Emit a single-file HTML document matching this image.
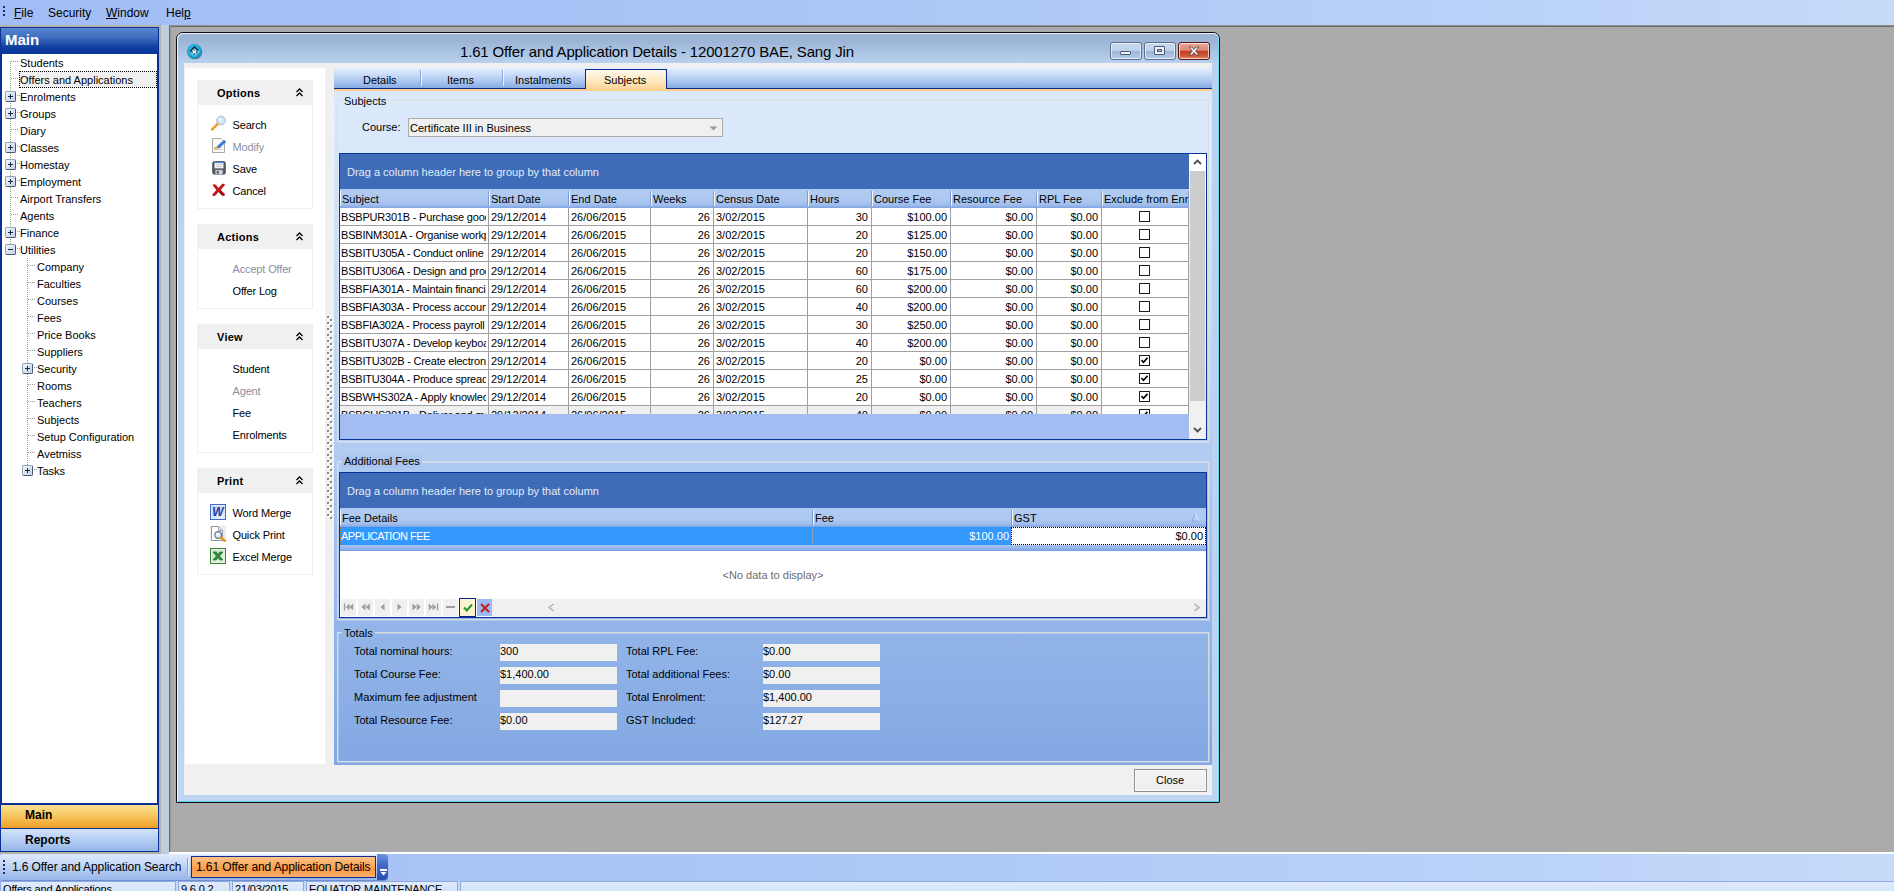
<!DOCTYPE html><html><head><meta charset="utf-8"><title>1.61 Offer and Application Details</title><style>

*{box-sizing:border-box;margin:0;padding:0}
html,body{width:1894px;height:891px;overflow:hidden}
body{position:relative;background:#ababab;font-family:"Liberation Sans",sans-serif;font-size:11px;color:#000;line-height:13px}
.a{position:absolute}
.t{position:absolute;white-space:nowrap;line-height:13px;height:13px}
u{text-decoration:underline}
#menubar{left:0;top:0;width:1894px;height:25px;background:linear-gradient(90deg,#a2bdf5 0%,#a9c4f6 40%,#bad2f8 80%,#c6dbf9 100%)}
#menubar .t{font-size:12px;top:6px;line-height:14px;height:14px}
#menuline{left:169px;top:25px;width:1725px;height:2px;background:linear-gradient(180deg,#8f8f8f 50%,#6b6b6b 50%)}
#band{left:0;top:25px;width:161px;height:829px;background:#b3b1ab}
#mdiwhite{left:169px;top:852px;width:1725px;height:2px;background:#fff}
#nav{left:0;top:27px;width:159px;height:825px;background:#0a2f96}
#navhead{left:1px;top:1px;width:157px;height:26px;background:linear-gradient(180deg,#5a86cf 0%,#3f6fc0 35%,#0f3f9e 75%,#0a3798 100%)}
#navhead .t{left:4px;top:3px;font-size:15px;font-weight:bold;color:#fff;line-height:18px;height:18px}
#tree{left:2px;top:27px;width:155px;height:749px;background:#fff}
.ti{font-size:11px}
.pm{position:absolute;width:11px;height:11px;border:1px solid;border-color:#93a3bd #4a5a76 #4a5a76 #93a3bd;background:linear-gradient(135deg,#f4f7fc,#c4d0e6);border-radius:2px}
.pm:before{content:"";position:absolute;left:2px;top:4px;width:5px;height:1px;background:#1a2a4a}
.pm.plus:after{content:"";position:absolute;left:4px;top:2px;width:1px;height:5px;background:#1a2a4a}
.hd{position:absolute;height:1px;background-image:linear-gradient(90deg,#9a9a9a 50%,transparent 50%);background-size:2px 1px}
.vd{position:absolute;width:1px;background-image:linear-gradient(180deg,#9a9a9a 50%,transparent 50%);background-size:1px 2px}
#navmain{left:1px;top:776px;width:157px;height:25px;background:linear-gradient(180deg,#fbe08e 0%,#f6c45e 50%,#f09f24 100%);border-top:2px solid #0a2f96}
#navrep{left:1px;top:802px;width:157px;height:22px;background:linear-gradient(180deg,#d3e2fa 0%,#b5cef3 50%,#94b5e8 100%)}
.nb{font-weight:bold;font-size:12px;left:24px}
#split{left:161px;top:25px;width:8px;height:829px;background:#c0cddf}
#mdiedge{left:169px;top:25px;width:2px;height:827px;background:linear-gradient(90deg,#6b6b6b 50%,#9a9a9a 50%)}
#tabbar{left:0;top:854px;width:1894px;height:27px;background:linear-gradient(90deg,#a4bff5 0%,#abc6f6 40%,#bad2f8 80%,#c6dbf9 100%)}
#tstrip{left:0;top:0px;width:388px;height:26px;border-radius:3px 4px 4px 3px;background:linear-gradient(180deg,#dfeafc 0%,#c9dbf8 35%,#a9c3ee 75%,#98b6ea 100%);box-shadow:0 1px 0 #6f8fd0}
#acttab{left:191px;top:2px;width:185px;height:22px;border:1px solid #15288f;background:linear-gradient(180deg,#fdc489 0%,#fca559 45%,#fc9a48 60%,#fdb06a 100%)}
#ovf{left:377px;top:0px;width:11px;height:26px;border-radius:0 4px 4px 0;background:linear-gradient(180deg,#6f93de 0%,#4169c8 40%,#2a4fb0 100%)}
.sp{position:absolute;top:0;height:12px;border:1px solid #8faade;border-bottom:none;background:linear-gradient(180deg,#dfeafc,#d2e2fa);overflow:hidden}
#status{left:0;top:881px;width:1894px;height:10px;background:#c5d9f8;overflow:hidden}

</style></head><body>
<div id="menubar" class="a">
<div class="a" style="left:3px;top:6px;width:2px;height:2px;background:#1c2f6b"></div>
<div class="a" style="left:3px;top:10px;width:2px;height:2px;background:#1c2f6b"></div>
<div class="a" style="left:3px;top:14px;width:2px;height:2px;background:#1c2f6b"></div>
<div class="t" style="left:14px"><u>F</u>ile</div>
<div class="t" style="left:48px">Security</div>
<div class="t" style="left:106px"><u>W</u>indow</div>
<div class="t" style="left:166px">Hel<u>p</u></div>
</div><div id="band" class="a"></div><div id="menuline" class="a"></div><div id="mdiwhite" class="a"></div>
<div id="nav" class="a">
<div id="navhead" class="a"><div class="t">Main</div></div>
<div id="tree" class="a">
<div class="vd" style="left:8px;top:7px;height:183px"></div>
<div class="vd" style="left:25px;top:204px;height:207px"></div>
<div class="t ti" style="left:18px;top:3px">Students</div>
<div class="hd" style="left:9px;top:7px;width:8px"></div>
<div class="a" style="left:17px;top:17px;width:138px;height:17px;background:#f0f0f0;border:1px dotted #000"></div>
<div class="t ti" style="left:18px;top:20px">Offers and Applications</div>
<div class="hd" style="left:9px;top:24px;width:8px"></div>
<div class="t ti" style="left:18px;top:37px">Enrolments</div>
<div class="pm plus" style="left:3px;top:37px"></div>
<div class="hd" style="left:15px;top:41px;width:3px"></div>
<div class="t ti" style="left:18px;top:54px">Groups</div>
<div class="pm plus" style="left:3px;top:54px"></div>
<div class="hd" style="left:15px;top:58px;width:3px"></div>
<div class="t ti" style="left:18px;top:71px">Diary</div>
<div class="hd" style="left:9px;top:75px;width:8px"></div>
<div class="t ti" style="left:18px;top:88px">Classes</div>
<div class="pm plus" style="left:3px;top:88px"></div>
<div class="hd" style="left:15px;top:92px;width:3px"></div>
<div class="t ti" style="left:18px;top:105px">Homestay</div>
<div class="pm plus" style="left:3px;top:105px"></div>
<div class="hd" style="left:15px;top:109px;width:3px"></div>
<div class="t ti" style="left:18px;top:122px">Employment</div>
<div class="pm plus" style="left:3px;top:122px"></div>
<div class="hd" style="left:15px;top:126px;width:3px"></div>
<div class="t ti" style="left:18px;top:139px">Airport Transfers</div>
<div class="hd" style="left:9px;top:143px;width:8px"></div>
<div class="t ti" style="left:18px;top:156px">Agents</div>
<div class="hd" style="left:9px;top:160px;width:8px"></div>
<div class="t ti" style="left:18px;top:173px">Finance</div>
<div class="pm plus" style="left:3px;top:173px"></div>
<div class="hd" style="left:15px;top:177px;width:3px"></div>
<div class="t ti" style="left:18px;top:190px">Utilities</div>
<div class="pm " style="left:3px;top:190px"></div>
<div class="hd" style="left:15px;top:194px;width:3px"></div>
<div class="t ti" style="left:35px;top:207px">Company</div>
<div class="hd" style="left:26px;top:211px;width:8px"></div>
<div class="t ti" style="left:35px;top:224px">Faculties</div>
<div class="hd" style="left:26px;top:228px;width:8px"></div>
<div class="t ti" style="left:35px;top:241px">Courses</div>
<div class="hd" style="left:26px;top:245px;width:8px"></div>
<div class="t ti" style="left:35px;top:258px">Fees</div>
<div class="hd" style="left:26px;top:262px;width:8px"></div>
<div class="t ti" style="left:35px;top:275px">Price Books</div>
<div class="hd" style="left:26px;top:279px;width:8px"></div>
<div class="t ti" style="left:35px;top:292px">Suppliers</div>
<div class="hd" style="left:26px;top:296px;width:8px"></div>
<div class="t ti" style="left:35px;top:309px">Security</div>
<div class="pm plus" style="left:20px;top:309px"></div>
<div class="hd" style="left:32px;top:313px;width:3px"></div>
<div class="t ti" style="left:35px;top:326px">Rooms</div>
<div class="hd" style="left:26px;top:330px;width:8px"></div>
<div class="t ti" style="left:35px;top:343px">Teachers</div>
<div class="hd" style="left:26px;top:347px;width:8px"></div>
<div class="t ti" style="left:35px;top:360px">Subjects</div>
<div class="hd" style="left:26px;top:364px;width:8px"></div>
<div class="t ti" style="left:35px;top:377px">Setup Configuration</div>
<div class="hd" style="left:26px;top:381px;width:8px"></div>
<div class="t ti" style="left:35px;top:394px">Avetmiss</div>
<div class="hd" style="left:26px;top:398px;width:8px"></div>
<div class="t ti" style="left:35px;top:411px">Tasks</div>
<div class="pm plus" style="left:20px;top:411px"></div>
<div class="hd" style="left:32px;top:415px;width:3px"></div>
</div>
<div id="navmain" class="a"><div class="t nb" style="top:4px">Main</div></div>
<div id="navrep" class="a"><div class="t nb" style="top:5px">Reports</div></div>
</div>
<div id="split" class="a"></div><div id="mdiedge" class="a"></div>
<style>
#dlg{left:176px;top:32px;width:1044px;height:771px;border:1px solid #0d0d0d;border-radius:7px 7px 1px 1px;background:linear-gradient(180deg,#9db6d7 0px,#9cb5d6 8px,#a9c2e2 18px,#b9d1ee 30px,#bdd5f1 100%)}
#dlgin{left:0;top:0;width:1042px;height:769px;border:1px solid #e9f6fd;border-radius:6px 6px 0 0;border-bottom-color:#5fd6f3;border-right-color:#6fdcf6}
#dtitle{left:283px;top:10px;font-size:15px;line-height:18px;height:18px;letter-spacing:-0.16px;color:#000}
.wb{position:absolute;top:9px;width:32px;height:18px;border:1px solid #5c6f8c;border-radius:3px;box-shadow:inset 0 0 0 1px rgba(255,255,255,.65);background:linear-gradient(180deg,#c6d8ee 0%,#bdd2ea 48%,#9bb6d6 52%,#b4cde9 100%)}
#client{left:7px;top:30px;width:1028px;height:732px;background:#f0f0f0}
#side{left:1px;top:5px;width:140px;height:696px;background:#fff}
.box{position:absolute;left:12px;width:116px;border:1px solid #f0f0f0;background:#fff}
.box .bh{position:absolute;left:0;top:0;width:114px;height:24px;background:#f0f0f0}
.box .bh .t{left:19px;top:6px;font-weight:bold;font-size:11px;letter-spacing:0.25px}
.box .chev{position:absolute;left:97px;top:7px;width:9px;height:9px}
.it{position:absolute;left:34.5px;white-space:nowrap;height:13px;line-height:13px;letter-spacing:-0.15px}
.dis{color:#8b8fa3}
.ic{position:absolute;left:13px;width:16px;height:16px}
</style>
<div id="dlg" class="a"><div id="dlgin" class="a"></div>
<svg class="a" style="left:9px;top:9px" width="18" height="18" viewBox="0 0 18 18"><defs><radialGradient id="gi" cx="45%" cy="40%" r="60%"><stop offset="0" stop-color="#3cc4f0"/><stop offset="0.75" stop-color="#14a6dc"/><stop offset="1" stop-color="#0b86b8"/></radialGradient></defs><circle cx="8.9" cy="9.9" r="7.4" fill="#5a5f66" opacity="0.7"/><circle cx="8.3" cy="9.3" r="7.4" fill="url(#gi)"/><path d="M8.3 4.6 L13 9.8 L8.3 14.6 L3.6 9.8 Z" fill="none" stroke="#e8f8ff" stroke-width="1" stroke-dasharray="1 1"/><circle cx="8.3" cy="9.8" r="2.2" fill="#fff"/><path d="M3.8 9.6 L8.3 4.9 L12.2 8.4" fill="none" stroke="#111" stroke-width="1.2"/><rect x="5.6" y="9.3" width="1.2" height="1.2" fill="#111"/><rect x="9.8" y="9.3" width="1.2" height="1.2" fill="#111"/><rect x="7.7" y="7.6" width="1.2" height="1" fill="#111"/><rect x="7.7" y="11.2" width="1.2" height="1.1" fill="#111"/></svg>
<div id="dtitle" class="t">1.61 Offer and Application Details - 12001270 BAE, Sang Jin</div>
<div class="wb" style="left:933px"><div class="a" style="left:9px;top:8px;width:11px;height:4px;background:#f4f4f4;border:1px solid #4a5a78;border-radius:1px"></div></div>
<div class="wb" style="left:967px"><div class="a" style="left:9px;top:3px;width:11px;height:9px;background:#f4f4f4;border:1px solid #4a5a78;border-radius:1px"></div><div class="a" style="left:12px;top:6px;width:5px;height:3px;background:#a9c0dd;border:1px solid #4a5a78"></div></div>
<div class="wb" style="left:1001px;width:32px;border-color:#5a1414;background:linear-gradient(180deg,#e8a898 0%,#dc8a78 45%,#c2401f 52%,#cf5a3a 80%,#df8a70 100%)"><svg class="a" style="left:9px;top:3px" width="12" height="10" viewBox="0 0 12 10"><path d="M1 1 L4 1 L6 3.4 L8 1 L11 1 L7.6 5 L11 9 L8 9 L6 6.6 L4 9 L1 9 L4.4 5 Z" fill="#f7f7f7" stroke="#5a3a3a" stroke-width="0.8"/></svg></div>
<div id="client" class="a">
<div id="side" class="a">
<div class="box" style="top:12px;height:129px"><div class="bh"><div class="t">Options</div><svg class="chev" viewBox="0 0 9 9"><path d="M1.5 4 L4.5 1 L7.5 4 M1.5 8 L4.5 5 L7.5 8" fill="none" stroke="#000" stroke-width="1.3"/></svg></div>
<svg class="ic" style="margin-left:0px;top:34px" viewBox="0 0 16 16"><circle cx="10" cy="5.5" r="4.3" fill="#cfe8f9" stroke="#a7b4e0" stroke-width="1"/><circle cx="9" cy="4.6" r="1.6" fill="#eef8ff"/><path d="M6.6 8.8 L1.2 14.4" stroke="#e8921c" stroke-width="2.4" stroke-linecap="round"/><path d="M6.3 8.4 L1.2 13.6" stroke="#f8c56a" stroke-width="0.8" stroke-linecap="round"/></svg>
<div class="it" style="top:38px">Search</div>
<svg class="ic" style="margin-left:0px;top:56px" viewBox="0 0 16 16"><path d="M1.5 1.5 L10 1.5 L13.5 5 L13.5 15.5 L1.5 15.5 Z" fill="#fafafa" stroke="#a9a9a9" stroke-width="1"/><path d="M3 10.5 H11 M3 12.5 H11" stroke="#c9c9c9" stroke-width="1"/><path d="M6 9.5 L13.2 3.3 L14.8 5 L7.6 11.2 Z" fill="#3f7ae0" stroke="#2a5fc4" stroke-width="0.6"/><path d="M3 11.5 L6 9.5 L7.6 11.2 L4 12.2 Z" fill="#f3a41c"/></svg>
<div class="it dis" style="top:60px">Modify</div>
<svg class="ic" style="margin-left:0px;top:78px" viewBox="-1 -2 18 18"><rect x="1" y="1" width="14" height="14" rx="1.5" fill="#5a5f68" stroke="#3a3e46" stroke-width="1"/><rect x="3" y="1.5" width="10" height="7" fill="#f4f6fa"/><rect x="3" y="1.2" width="10" height="1.4" fill="#3f86e8"/><path d="M4.5 4.5 H11.5 M4.5 6.5 H11.5" stroke="#c4c8d0" stroke-width="1"/><rect x="4" y="10.5" width="8" height="4.5" fill="#d9dce2"/><rect x="5.5" y="11.3" width="2.2" height="3.2" fill="#4a4e56"/></svg>
<div class="it" style="top:82px">Save</div>
<svg class="ic" style="margin-left:0px;top:100px" viewBox="0 -1.5 17 17"><path d="M1.5 2.5 C3 1.5 4.5 1.8 5.3 2.8 L8 6 L11.5 2 C12.5 1.2 14 1.5 15 2.5 L10.3 8 L15 13 C14 14.2 12.6 14.4 11.4 13.6 L8 10.2 L4.6 14 C3.4 14.8 2 14.4 1 13.4 L5.6 8 Z" fill="#c4161a"/><path d="M10.3 8 L15 13 C14 14.2 12.6 14.4 11.4 13.6 L8.6 10.8 Z" fill="#9e1013"/></svg>
<div class="it" style="top:104px">Cancel</div>
</div>
<div class="box" style="top:156px;height:85px"><div class="bh"><div class="t">Actions</div><svg class="chev" viewBox="0 0 9 9"><path d="M1.5 4 L4.5 1 L7.5 4 M1.5 8 L4.5 5 L7.5 8" fill="none" stroke="#000" stroke-width="1.3"/></svg></div>
<div class="it dis" style="top:38px">Accept Offer</div>
<div class="it" style="top:60px">Offer Log</div>
</div>
<div class="box" style="top:256px;height:129px"><div class="bh"><div class="t">View</div><svg class="chev" viewBox="0 0 9 9"><path d="M1.5 4 L4.5 1 L7.5 4 M1.5 8 L4.5 5 L7.5 8" fill="none" stroke="#000" stroke-width="1.3"/></svg></div>
<div class="it" style="top:38px">Student</div>
<div class="it dis" style="top:60px">Agent</div>
<div class="it" style="top:82px">Fee</div>
<div class="it" style="top:104px">Enrolments</div>
</div>
<div class="box" style="top:400px;height:107px"><div class="bh"><div class="t">Print</div><svg class="chev" viewBox="0 0 9 9"><path d="M1.5 4 L4.5 1 L7.5 4 M1.5 8 L4.5 5 L7.5 8" fill="none" stroke="#000" stroke-width="1.3"/></svg></div>
<svg class="ic" style="margin-left:-1px;top:35px" viewBox="0 0 16 16"><defs><linearGradient id="gw" x1="0" y1="0" x2="1" y2="1"><stop offset="0" stop-color="#b4c8f2"/><stop offset="1" stop-color="#eef3fc"/></linearGradient></defs><rect x="0.5" y="0.5" width="15" height="15" fill="url(#gw)" stroke="#4668c8" stroke-width="1"/><rect x="1.5" y="1.5" width="13" height="13" fill="none" stroke="#e4ecfb" stroke-width="1"/><text x="8" y="12.3" font-family="Liberation Sans,sans-serif" font-size="12" font-weight="bold" font-style="italic" fill="#22409c" text-anchor="middle">W</text></svg>
<div class="it" style="top:38px">Word Merge</div>
<svg class="ic" style="margin-left:-1px;top:57px" viewBox="0 0 16 16"><rect x="0" y="0" width="16" height="15" fill="#ececec"/><path d="M1.5 0.5 L8.5 0.5 L12.5 4.5 L12.5 14.5 L1.5 14.5 Z" fill="#fdfdfd" stroke="#8b97ab" stroke-width="1"/><path d="M8.5 0.5 L8.5 4.5 L12.5 4.5" fill="#dfe4ec" stroke="#8b97ab" stroke-width="0.8"/><circle cx="8.2" cy="9" r="3.3" fill="#d3e8fa" stroke="#6f7a8a" stroke-width="1.2"/><circle cx="7.4" cy="8.2" r="1.2" fill="#f4fbff"/><path d="M11 11.6 L14.8 15" stroke="#e8921c" stroke-width="2.4" stroke-linecap="round"/></svg>
<div class="it" style="top:60px">Quick Print</div>
<svg class="ic" style="margin-left:-1px;top:79px" viewBox="0 0 16 16"><defs><linearGradient id="gx" x1="0" y1="0" x2="1" y2="1"><stop offset="0" stop-color="#bfe0ba"/><stop offset="1" stop-color="#eef8ec"/></linearGradient></defs><rect x="0.5" y="0.5" width="15" height="15" fill="url(#gx)" stroke="#3a8436" stroke-width="1"/><rect x="1.5" y="1.5" width="13" height="13" fill="none" stroke="#e2f3df" stroke-width="1"/><path d="M3 4 L6.4 4 L8 6.3 L9.8 4 L13 4 L9.6 8 L13 12 L9.8 12 L8 9.8 L6.2 12 L3 12 L6.4 8 Z" fill="#2f8f3a" stroke="#1f6a2a" stroke-width="0.6"/></svg>
<div class="it" style="top:82px">Excel Merge</div>
</div>
</div>
<svg class="a" style="left:143px;top:253px" width="6" height="204" viewBox="0 0 6 204"><defs><pattern id="gp" width="6" height="6" patternUnits="userSpaceOnUse"><rect x="1" y="1" width="2" height="2" fill="#fff"/><rect x="4" y="4" width="2" height="2" fill="#fff"/><rect x="0" y="0" width="2" height="2" fill="#8a8a8a"/><rect x="3" y="3" width="2" height="2" fill="#8a8a8a"/></pattern></defs><rect width="6" height="204" fill="url(#gp)"/></svg>
<style>
#tabstrip{background:linear-gradient(180deg,#eaf2fd 0%,#d3e3fa 25%,#a9c5f0 70%,#86abe5 100%)}
#panel{background:linear-gradient(180deg,#dce9fb 0%,#d9e7fb 10%,#b6cff2 50%,#92b4e8 80%,#83a8e2 100%)}
.gb{position:absolute;border:1px solid #d9dbde;box-shadow:inset 1px 1px 0 rgba(255,255,255,.25), 1px 1px 0 rgba(255,255,255,.25)}
.grid{position:absolute;border:1px solid #0b339c;background:#fff;overflow:hidden}
.gp{position:absolute;left:0;top:0;height:35px;background:#3e6cb9}
.gp .t{left:7px;top:12px;color:#e3ebf8}
.hdr{position:absolute;height:19px;background:linear-gradient(180deg,#b1cbf2 0%,#adc8f0 60%,#9fbdec 85%,#7fa3e0 100%)}
.hc{position:absolute;top:0;height:19px;overflow:hidden;padding-left:1px}
.hc:before{content:'';position:absolute;left:0;top:2px;width:1px;height:15px;background:#f4f8fe}
.hc:after{content:'';position:absolute;right:0;top:2px;width:1px;height:15px;background:#7f9bd0}
.hc .t{left:2px;top:4px}
.row{position:absolute;left:0;height:18px;border-bottom:1px solid #a0a0a0;background:#fff}
.c{position:absolute;top:0;height:17px;border-right:1px solid #a0a0a0;overflow:hidden;white-space:nowrap;line-height:13px;padding-top:3px}
.c.r{text-align:right;padding-right:3px}
.c.l{padding-left:1px}
.c.d{padding-left:2px}
.c.s{letter-spacing:-0.2px}
.cb{position:absolute;top:3px;width:11px;height:11px;border:1px solid #1c1c1c;background:#fff}
.inp{position:absolute;height:17px;background:#f0f0f0;line-height:13px;padding:1px 0 0 0;white-space:nowrap;overflow:hidden}
</style>
<div class="a" id="tabstrip" style="left:150px;top:4px;width:878px;height:21px;"></div>
<div class="a" style="left:150px;top:25px;width:878px;height:1px;background:#0a2a8c"></div>
<div class="a" style="left:150px;top:26px;width:878px;height:2px;background:#fdd08c"></div>
<div class="t" style="left:179px;top:11px;">Details</div>
<div class="a" style="left:236px;top:7px;width:1px;height:16px;background:#8aa6d8"></div>
<div class="a" style="left:237px;top:7px;width:1px;height:16px;background:#eef4fd"></div>
<div class="t" style="left:263px;top:11px;">Items</div>
<div class="a" style="left:318px;top:7px;width:1px;height:16px;background:#8aa6d8"></div>
<div class="a" style="left:319px;top:7px;width:1px;height:16px;background:#eef4fd"></div>
<div class="t" style="left:331px;top:11px;">Instalments</div>
<div class="a" style="left:401px;top:6px;width:82px;height:20px;border:1px solid #0a2a8c;border-bottom:none;background:linear-gradient(180deg,#fff9ef 0%,#feecc9 45%,#fdd497 100%)"></div>
<div class="t" style="left:420px;top:11px;">Subjects</div>
<div class="a" id="panel" style="left:150px;top:28px;width:878px;height:674px;"></div>
<div class="gb" style="left:153px;top:37px;width:872px;height:342px;"></div>
<div class="t" style="left:158px;top:32px;padding:0 2px;background:#dae8fb">Subjects</div>
<div class="t" style="left:178px;top:58px;">Course:</div>
<div class="a" style="left:224px;top:55px;width:315px;height:19px;border:1px solid #ababab;background:#f0f0f0"></div>
<div class="t" style="left:226px;top:59px;">Certificate III in Business</div>
<svg class="a" style="left:525px;top:63px" width="9" height="5" viewBox="0 0 9 5"><path d="M0.5 0.5 L8.5 0.5 L4.5 4.5 Z" fill="#9a9a9a"/></svg>
<div class="grid" style="left:155px;top:90px;width:868px;height:287px;background:#a3bdf2">
<div class="gp" style="width:849px"><div class="t">Drag a column header here to group by that column</div></div>
<div class="hdr" style="left:0;top:35px;width:849px">
<div class="hc" style="left:0px;width:149px"><div class="t">Subject</div></div>
<div class="hc" style="left:149px;width:80px"><div class="t">Start Date</div></div>
<div class="hc" style="left:229px;width:82px"><div class="t">End Date</div></div>
<div class="hc" style="left:311px;width:63px"><div class="t">Weeks</div></div>
<div class="hc" style="left:374px;width:94px"><div class="t">Census Date</div></div>
<div class="hc" style="left:468px;width:64px"><div class="t">Hours</div></div>
<div class="hc" style="left:532px;width:79px"><div class="t">Course Fee</div></div>
<div class="hc" style="left:611px;width:86px"><div class="t">Resource Fee</div></div>
<div class="hc" style="left:697px;width:65px"><div class="t">RPL Fee</div></div>
<div class="hc" style="left:762px;width:87px"><div class="t">Exclude from Enrolment</div></div>
</div>
<div class="a" style="left:0;top:54px;width:849px;height:206px;overflow:hidden;background:#fff">
<div class="row" style="top:0px;width:849px">
<div class="c l s" style="left:0px;width:149px"><div style="width:145px;overflow:hidden">BSBPUR301B - Purchase goods and services</div></div>
<div class="c d" style="left:149px;width:80px">29/12/2014</div>
<div class="c d" style="left:229px;width:82px">26/06/2015</div>
<div class="c r" style="left:311px;width:63px">26</div>
<div class="c d" style="left:374px;width:94px">3/02/2015</div>
<div class="c r" style="left:468px;width:64px">30</div>
<div class="c r" style="left:532px;width:79px">$100.00</div>
<div class="c r" style="left:611px;width:86px">$0.00</div>
<div class="c r" style="left:697px;width:65px">$0.00</div>
<div class="c" style="left:762px;width:87px;padding:0;background:#fff"><div class="cb" style="left:37px"></div></div>
</div>
<div class="row" style="top:18px;width:849px">
<div class="c l s" style="left:0px;width:149px"><div style="width:145px;overflow:hidden">BSBINM301A - Organise workplace information</div></div>
<div class="c d" style="left:149px;width:80px">29/12/2014</div>
<div class="c d" style="left:229px;width:82px">26/06/2015</div>
<div class="c r" style="left:311px;width:63px">26</div>
<div class="c d" style="left:374px;width:94px">3/02/2015</div>
<div class="c r" style="left:468px;width:64px">20</div>
<div class="c r" style="left:532px;width:79px">$125.00</div>
<div class="c r" style="left:611px;width:86px">$0.00</div>
<div class="c r" style="left:697px;width:65px">$0.00</div>
<div class="c" style="left:762px;width:87px;padding:0;background:#fff"><div class="cb" style="left:37px"></div></div>
</div>
<div class="row" style="top:36px;width:849px">
<div class="c l s" style="left:0px;width:149px"><div style="width:145px;overflow:hidden">BSBITU305A - Conduct online</div></div>
<div class="c d" style="left:149px;width:80px">29/12/2014</div>
<div class="c d" style="left:229px;width:82px">26/06/2015</div>
<div class="c r" style="left:311px;width:63px">26</div>
<div class="c d" style="left:374px;width:94px">3/02/2015</div>
<div class="c r" style="left:468px;width:64px">20</div>
<div class="c r" style="left:532px;width:79px">$150.00</div>
<div class="c r" style="left:611px;width:86px">$0.00</div>
<div class="c r" style="left:697px;width:65px">$0.00</div>
<div class="c" style="left:762px;width:87px;padding:0;background:#fff"><div class="cb" style="left:37px"></div></div>
</div>
<div class="row" style="top:54px;width:849px">
<div class="c l s" style="left:0px;width:149px"><div style="width:145px;overflow:hidden">BSBITU306A - Design and produce business documents</div></div>
<div class="c d" style="left:149px;width:80px">29/12/2014</div>
<div class="c d" style="left:229px;width:82px">26/06/2015</div>
<div class="c r" style="left:311px;width:63px">26</div>
<div class="c d" style="left:374px;width:94px">3/02/2015</div>
<div class="c r" style="left:468px;width:64px">60</div>
<div class="c r" style="left:532px;width:79px">$175.00</div>
<div class="c r" style="left:611px;width:86px">$0.00</div>
<div class="c r" style="left:697px;width:65px">$0.00</div>
<div class="c" style="left:762px;width:87px;padding:0;background:#fff"><div class="cb" style="left:37px"></div></div>
</div>
<div class="row" style="top:72px;width:849px">
<div class="c l s" style="left:0px;width:149px"><div style="width:145px;overflow:hidden">BSBFIA301A - Maintain financial records</div></div>
<div class="c d" style="left:149px;width:80px">29/12/2014</div>
<div class="c d" style="left:229px;width:82px">26/06/2015</div>
<div class="c r" style="left:311px;width:63px">26</div>
<div class="c d" style="left:374px;width:94px">3/02/2015</div>
<div class="c r" style="left:468px;width:64px">60</div>
<div class="c r" style="left:532px;width:79px">$200.00</div>
<div class="c r" style="left:611px;width:86px">$0.00</div>
<div class="c r" style="left:697px;width:65px">$0.00</div>
<div class="c" style="left:762px;width:87px;padding:0;background:#fff"><div class="cb" style="left:37px"></div></div>
</div>
<div class="row" style="top:90px;width:849px">
<div class="c l s" style="left:0px;width:149px"><div style="width:145px;overflow:hidden">BSBFIA303A - Process accounts payable</div></div>
<div class="c d" style="left:149px;width:80px">29/12/2014</div>
<div class="c d" style="left:229px;width:82px">26/06/2015</div>
<div class="c r" style="left:311px;width:63px">26</div>
<div class="c d" style="left:374px;width:94px">3/02/2015</div>
<div class="c r" style="left:468px;width:64px">40</div>
<div class="c r" style="left:532px;width:79px">$200.00</div>
<div class="c r" style="left:611px;width:86px">$0.00</div>
<div class="c r" style="left:697px;width:65px">$0.00</div>
<div class="c" style="left:762px;width:87px;padding:0;background:#fff"><div class="cb" style="left:37px"></div></div>
</div>
<div class="row" style="top:108px;width:849px">
<div class="c l s" style="left:0px;width:149px"><div style="width:145px;overflow:hidden">BSBFIA302A - Process payroll</div></div>
<div class="c d" style="left:149px;width:80px">29/12/2014</div>
<div class="c d" style="left:229px;width:82px">26/06/2015</div>
<div class="c r" style="left:311px;width:63px">26</div>
<div class="c d" style="left:374px;width:94px">3/02/2015</div>
<div class="c r" style="left:468px;width:64px">30</div>
<div class="c r" style="left:532px;width:79px">$250.00</div>
<div class="c r" style="left:611px;width:86px">$0.00</div>
<div class="c r" style="left:697px;width:65px">$0.00</div>
<div class="c" style="left:762px;width:87px;padding:0;background:#fff"><div class="cb" style="left:37px"></div></div>
</div>
<div class="row" style="top:126px;width:849px">
<div class="c l s" style="left:0px;width:149px"><div style="width:145px;overflow:hidden">BSBITU307A - Develop keyboarding speed</div></div>
<div class="c d" style="left:149px;width:80px">29/12/2014</div>
<div class="c d" style="left:229px;width:82px">26/06/2015</div>
<div class="c r" style="left:311px;width:63px">26</div>
<div class="c d" style="left:374px;width:94px">3/02/2015</div>
<div class="c r" style="left:468px;width:64px">40</div>
<div class="c r" style="left:532px;width:79px">$200.00</div>
<div class="c r" style="left:611px;width:86px">$0.00</div>
<div class="c r" style="left:697px;width:65px">$0.00</div>
<div class="c" style="left:762px;width:87px;padding:0;background:#fff"><div class="cb" style="left:37px"></div></div>
</div>
<div class="row" style="top:144px;width:849px">
<div class="c l s" style="left:0px;width:149px"><div style="width:145px;overflow:hidden">BSBITU302B - Create electronic presentations</div></div>
<div class="c d" style="left:149px;width:80px">29/12/2014</div>
<div class="c d" style="left:229px;width:82px">26/06/2015</div>
<div class="c r" style="left:311px;width:63px">26</div>
<div class="c d" style="left:374px;width:94px">3/02/2015</div>
<div class="c r" style="left:468px;width:64px">20</div>
<div class="c r" style="left:532px;width:79px">$0.00</div>
<div class="c r" style="left:611px;width:86px">$0.00</div>
<div class="c r" style="left:697px;width:65px">$0.00</div>
<div class="c" style="left:762px;width:87px;padding:0;background:#fff"><div class="cb" style="left:37px"><svg style="position:absolute;left:1px;top:1px" width="7" height="7" viewBox="0 0 7 7"><path d="M0.5 3 L2.5 5.2 L6.5 0.8" fill="none" stroke="#000" stroke-width="1.6"/></svg></div></div>
</div>
<div class="row" style="top:162px;width:849px">
<div class="c l s" style="left:0px;width:149px"><div style="width:145px;overflow:hidden">BSBITU304A - Produce spreadsheets</div></div>
<div class="c d" style="left:149px;width:80px">29/12/2014</div>
<div class="c d" style="left:229px;width:82px">26/06/2015</div>
<div class="c r" style="left:311px;width:63px">26</div>
<div class="c d" style="left:374px;width:94px">3/02/2015</div>
<div class="c r" style="left:468px;width:64px">25</div>
<div class="c r" style="left:532px;width:79px">$0.00</div>
<div class="c r" style="left:611px;width:86px">$0.00</div>
<div class="c r" style="left:697px;width:65px">$0.00</div>
<div class="c" style="left:762px;width:87px;padding:0;background:#fff"><div class="cb" style="left:37px"><svg style="position:absolute;left:1px;top:1px" width="7" height="7" viewBox="0 0 7 7"><path d="M0.5 3 L2.5 5.2 L6.5 0.8" fill="none" stroke="#000" stroke-width="1.6"/></svg></div></div>
</div>
<div class="row" style="top:180px;width:849px">
<div class="c l s" style="left:0px;width:149px"><div style="width:145px;overflow:hidden">BSBWHS302A - Apply knowledge of WHS</div></div>
<div class="c d" style="left:149px;width:80px">29/12/2014</div>
<div class="c d" style="left:229px;width:82px">26/06/2015</div>
<div class="c r" style="left:311px;width:63px">26</div>
<div class="c d" style="left:374px;width:94px">3/02/2015</div>
<div class="c r" style="left:468px;width:64px">20</div>
<div class="c r" style="left:532px;width:79px">$0.00</div>
<div class="c r" style="left:611px;width:86px">$0.00</div>
<div class="c r" style="left:697px;width:65px">$0.00</div>
<div class="c" style="left:762px;width:87px;padding:0;background:#fff"><div class="cb" style="left:37px"><svg style="position:absolute;left:1px;top:1px" width="7" height="7" viewBox="0 0 7 7"><path d="M0.5 3 L2.5 5.2 L6.5 0.8" fill="none" stroke="#000" stroke-width="1.6"/></svg></div></div>
</div>
<div class="row" style="top:198px;width:849px;background:#f0f0f0">
<div class="c l s" style="left:0px;width:149px"><div style="width:145px;overflow:hidden">BSBCUS301B - Deliver and monitor a service</div></div>
<div class="c d" style="left:149px;width:80px">29/12/2014</div>
<div class="c d" style="left:229px;width:82px">26/06/2015</div>
<div class="c r" style="left:311px;width:63px">26</div>
<div class="c d" style="left:374px;width:94px">3/02/2015</div>
<div class="c r" style="left:468px;width:64px">40</div>
<div class="c r" style="left:532px;width:79px">$0.00</div>
<div class="c r" style="left:611px;width:86px">$0.00</div>
<div class="c r" style="left:697px;width:65px">$0.00</div>
<div class="c" style="left:762px;width:87px;padding:0;background:#fff"><div class="cb" style="left:37px"><svg style="position:absolute;left:1px;top:1px" width="7" height="7" viewBox="0 0 7 7"><path d="M0.5 3 L2.5 5.2 L6.5 0.8" fill="none" stroke="#000" stroke-width="1.6"/></svg></div></div>
</div>
</div>
<div class="a" style="left:849px;top:0;width:17px;height:285px;background:#f0f0f0"></div>
<div class="a" style="left:849px;top:0;width:17px;height:17px;background:#fff"></div>
<div class="a" style="left:850px;top:17px;width:15px;height:230px;background:#cdcdcd"></div>
<svg class="a" style="left:853px;top:5px" width="9" height="6" viewBox="0 0 9 6"><path d="M1 5 L4.5 1.5 L8 5" fill="none" stroke="#505050" stroke-width="1.8"/></svg>
<svg class="a" style="left:853px;top:273px" width="9" height="6" viewBox="0 0 9 6"><path d="M1 1 L4.5 4.5 L8 1" fill="none" stroke="#505050" stroke-width="1.8"/></svg>
</div>
<div class="gb" style="left:153px;top:398px;width:872px;height:159px;"></div>
<div class="t" style="left:158px;top:392px;padding:0 2px;background:#aac6f0">Additional Fees</div>
<div class="grid" style="left:155px;top:409px;width:868px;height:146px">
<div class="gp" style="width:866px"><div class="t">Drag a column header here to group by that column</div></div>
<div class="hdr" style="left:0;top:35px;width:866px">
<div class="hc" style="left:0px;width:473px"><div class="t">Fee Details</div></div>
<div class="hc" style="left:473px;width:199px"><div class="t">Fee</div></div>
<div class="hc" style="left:672px;width:195px"><div class="t">GST</div></div>
<svg class="a" style="left:851px;top:4px" width="9" height="10" viewBox="0 0 9 10"><path d="M4.5 1 L8 9 L1 9 Z" fill="#b9d0f4" stroke="#7f9fe6" stroke-width="0.9"/><path d="M4.5 1 L8 9" stroke="#f4f8ff" stroke-width="0.9"/></svg>
</div>
<div class="a" style="left:0;top:54px;width:866px;height:18px;background:#3399ff;outline:1px dotted #c86a1e;outline-offset:-1px"></div>
<div class="t" style="left:1px;top:57px;color:#fff;letter-spacing:-0.5px">APPLICATION FEE</div>
<div class="a" style="left:472px;top:55px;width:1px;height:16px;background:#8aa0b8"></div>
<div class="t" style="left:473px;top:57px;width:196px;text-align:right;color:#fff">$100.00</div>
<div class="a" style="left:671px;top:54px;width:195px;height:18px;background:#fff;border:1px dotted #000"></div>
<div class="t" style="left:673px;top:57px;width:190px;text-align:right">$0.00</div>
<div class="a" style="left:0;top:72px;width:866px;height:6px;background:linear-gradient(180deg,#a9c4f3,#8fb0ea 70%,#6f96df)"></div>
<div class="t" style="left:0;top:96px;width:866px;text-align:center;color:#6d6d6d">&lt;No data to display&gt;</div>
<div class="a" style="left:0;top:126px;width:866px;height:18px;background:#f0f0f0"></div>
<div class="a" style="left:0;top:126px;width:152px;height:18px;background:#fff"></div>
<svg class="a" style="left:1px;top:126px;background:#f0f0f0" width="15" height="17" viewBox="0 -0.5 15 17"><path d="M3.5 4 V11" stroke="#9c9c9c" stroke-width="1.3"/><path d="M8.5 4 L4.8 7.5 L8.5 11 Z M12.2 4 L8.5 7.5 L12.2 11 Z" fill="#9c9c9c"/></svg>
<svg class="a" style="left:18px;top:126px;background:#f0f0f0" width="15" height="17" viewBox="0 -0.5 15 17"><path d="M7.5 4 L3.5 7.5 L7.5 11 Z M11.8 4 L7.8 7.5 L11.8 11 Z" fill="#9c9c9c"/></svg>
<svg class="a" style="left:35px;top:126px;background:#f0f0f0" width="15" height="17" viewBox="0 -0.5 15 17"><path d="M9.5 4 L5.5 7.5 L9.5 11 Z" fill="#9c9c9c"/></svg>
<svg class="a" style="left:52px;top:126px;background:#f0f0f0" width="15" height="17" viewBox="0 -0.5 15 17"><path d="M5.5 4 L9.5 7.5 L5.5 11 Z" fill="#9c9c9c"/></svg>
<svg class="a" style="left:69px;top:126px;background:#f0f0f0" width="15" height="17" viewBox="0 -0.5 15 17"><path d="M3.5 4 L7.5 7.5 L3.5 11 Z M7.8 4 L11.8 7.5 L7.8 11 Z" fill="#9c9c9c"/></svg>
<svg class="a" style="left:86px;top:126px;background:#f0f0f0" width="15" height="17" viewBox="0 -0.5 15 17"><path d="M11.5 4 V11" stroke="#9c9c9c" stroke-width="1.3"/><path d="M2.8 4 L6.5 7.5 L2.8 11 Z M6.5 4 L10.2 7.5 L6.5 11 Z" fill="#9c9c9c"/></svg>
<svg class="a" style="left:103px;top:126px;background:#f0f0f0" width="15" height="17" viewBox="0 -0.5 15 17"><path d="M3 7.5 H12" stroke="#9c9c9c" stroke-width="2"/></svg>
<div class="a" style="left:119px;top:125px;width:17px;height:19px;background:#fdf3d1;border:1px solid #0a1f8c"><svg style="position:absolute;left:3px;top:4px" width="10" height="9" viewBox="0 0 10 9"><path d="M1 4.5 L3.8 7.5 L9 1.5" fill="none" stroke="#1f9a1f" stroke-width="2"/></svg></div>
<div class="a" style="left:137px;top:126px;width:15px;height:17px;background:#9dbaf5"><svg style="position:absolute;left:3px;top:4px" width="10" height="10" viewBox="0 0 10 10"><path d="M1 1 L9 9 M9 1 L1 9" stroke="#c41a1a" stroke-width="2"/></svg></div>
<svg class="a" style="left:207px;top:130px" width="8" height="9" viewBox="0 0 8 9"><path d="M6.5 1 L2 4.5 L6.5 8" fill="none" stroke="#b0b0b0" stroke-width="1.5"/></svg>
<svg class="a" style="left:853px;top:130px" width="8" height="9" viewBox="0 0 8 9"><path d="M1.5 1 L6 4.5 L1.5 8" fill="none" stroke="#b0b0b0" stroke-width="1.5"/></svg>
</div>
<div class="gb" style="left:153px;top:569px;width:872px;height:130px;"></div>
<div class="t" style="left:158px;top:564px;padding:0 2px;background:#93b5e8">Totals</div>
<div class="t" style="left:170px;top:582px;">Total nominal hours:</div>
<div class="inp" style="left:316px;top:581px;width:117px;height:17px;">300</div>
<div class="t" style="left:442px;top:582px;">Total RPL Fee:</div>
<div class="inp" style="left:579px;top:581px;width:117px;height:17px;">$0.00</div>
<div class="t" style="left:170px;top:605px;">Total Course Fee:</div>
<div class="inp" style="left:316px;top:604px;width:117px;height:17px;">$1,400.00</div>
<div class="t" style="left:442px;top:605px;">Total additional Fees:</div>
<div class="inp" style="left:579px;top:604px;width:117px;height:17px;">$0.00</div>
<div class="t" style="left:170px;top:628px;">Maximum fee adjustment</div>
<div class="inp" style="left:316px;top:627px;width:117px;height:17px;"></div>
<div class="t" style="left:442px;top:628px;">Total Enrolment:</div>
<div class="inp" style="left:579px;top:627px;width:117px;height:17px;">$1,400.00</div>
<div class="t" style="left:170px;top:651px;">Total Resource Fee:</div>
<div class="inp" style="left:316px;top:650px;width:117px;height:17px;">$0.00</div>
<div class="t" style="left:442px;top:651px;">GST Included:</div>
<div class="inp" style="left:579px;top:650px;width:117px;height:17px;">$127.27</div>
<div class="a" style="left:950px;top:706px;width:73px;height:23px;border:1px solid #8e8f8f;background:linear-gradient(180deg,#f4f4f4,#ececec);box-shadow:inset 0 0 0 1px #fafafa"></div>
<div class="t" style="left:972px;top:711px;">Close</div>
</div>
</div>
<div id="tabbar" class="a">
<div id="tstrip" class="a"></div>
<div class="a" style="left:3px;top:6px;width:2px;height:2px;background:#1c2f6b"></div>
<div class="a" style="left:3px;top:10px;width:2px;height:2px;background:#1c2f6b"></div>
<div class="a" style="left:3px;top:14px;width:2px;height:2px;background:#1c2f6b"></div>
<div class="a" style="left:3px;top:18px;width:2px;height:2px;background:#1c2f6b"></div>
<div class="t" style="left:12px;top:6px;font-size:12px;line-height:14px;height:14px;letter-spacing:-0.1px">1.6 Offer and Application Search</div>
<div class="a" style="left:187px;top:4px;width:1px;height:18px;background:#7f9fd8"></div><div class="a" style="left:188px;top:4px;width:1px;height:18px;background:#eaf1fd"></div>
<div class="a" id="acttab"><div class="t" style="left:4px;top:3px;font-size:12px;line-height:14px;height:14px;letter-spacing:-0.1px">1.61 Offer and Application Details</div></div>
<div class="a" id="ovf"><div class="a" style="left:3px;top:15px;width:7px;height:1.5px;background:#fff"></div><svg class="a" style="left:3px;top:18px" width="7" height="4" viewBox="0 0 7 4"><path d="M0.5 0 L6.5 0 L3.5 3.5 Z" fill="#fff"/></svg></div>
</div>
<div id="status" class="a">
<div class="sp" style="left:0px;width:176px"><div class="t" style="left:2px;top:1px;letter-spacing:-0.18px">Offers and Applications</div></div>
<div class="sp" style="left:178px;width:52px"><div class="t" style="left:2px;top:1px;letter-spacing:-0.18px">9.6.0.2</div></div>
<div class="sp" style="left:232px;width:72px"><div class="t" style="left:2px;top:1px;letter-spacing:-0.18px">21/03/2015</div></div>
<div class="sp" style="left:306px;width:152px"><div class="t" style="left:2px;top:1px;letter-spacing:-0.18px">EQUATOR MAINTENANCE</div></div>
<div class="sp" style="left:460px;width:1435px"><div class="t" style="left:2px;top:1px;letter-spacing:-0.18px"></div></div>
</div>
</body></html>
